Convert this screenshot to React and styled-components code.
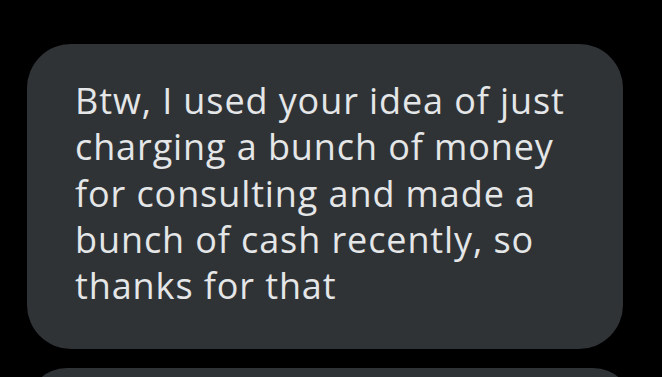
import React from "react";
import styled, { createGlobalStyle } from "styled-components";

const Global = createGlobalStyle`
  html, body { margin: 0; padding: 0; background: #000; }
  body { width: 662px; height: 377px; overflow: hidden; }
`;

const Thread = styled.div`
  display: flex;
  flex-direction: column;
  gap: 19px;
  padding: 44px 0 0 27px;
`;

const Bubble = styled.div`
  box-sizing: border-box;
  width: ${(p) => p.$width}px;
  min-height: ${(p) => p.$height || 0}px;
  background: #2f3336;
  border-radius: 44px;
  padding: 34px 30px 40px 48px;
  color: #e4e6e7;
  font-family: "Open Sans", "Noto Sans", sans-serif;
  font-size: 36px;
  line-height: 46.25px;
  letter-spacing: 0.9px;
  white-space: nowrap;
`;

export default function App() {
  return (
    <>
      <Global />
      <Thread>
        <Bubble $width={596}>
          Btw, I used your idea of just
          <br />
          charging a bunch of money
          <br />
          for consulting and made a
          <br />
          bunch of cash recently, so
          <br />
          thanks for that
        </Bubble>
        <Bubble $width={606} $height={80} />
      </Thread>
    </>
  );
}
